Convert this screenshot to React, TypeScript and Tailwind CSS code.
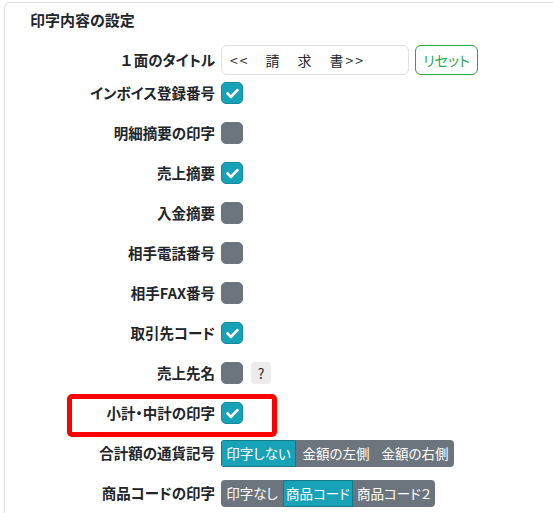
import React from 'react'

const font = { fontFamily: '"Noto Sans CJK JP", "Noto Sans", sans-serif', fontFeatureSettings: '"palt"' }

function Check({ on }: { on: boolean }) {
  return (
    <span
      className={
        'flex h-[22px] w-[22px] items-center justify-center rounded-[5px] border ' +
        (on ? 'border-[#138a9c] bg-[#17a2b8]' : 'border-[#6c757d] bg-[#6c757d]')
      }
    >
      {on && (
        <svg viewBox="0 0 512 512" className="h-[13px] w-[13px]" fill="#fff">
          <path d="M173.9 439.4 7.5 273c-10-10-10-26.2 0-36.2l36.2-36.2c10-10 26.2-10 36.2 0L192 312.7 432.1 72.6c10-10 26.2-10 36.2 0l36.2 36.2c10 10 10 26.2 0 36.2L210.1 439.4c-10 10-26.2 10-36.2 0z" />
        </svg>
      )}
    </span>
  )
}

// widths follow the screenshot
function Segs({ items, active }: { items: [string, string][]; active: number }) {
  return (
    <div className="flex h-[27px] overflow-hidden rounded-[4px] bg-[#6c757d] text-[13.5px] text-white">
      {items.map(([t, w], i) => (
        <span
          key={t}
          className={
            'flex items-center justify-center whitespace-nowrap ' +
            w +
            (i === active ? ' border border-[#117a8b] bg-[#17a2b8]' : '')
          }
        >
          {t}
        </span>
      ))}
    </div>
  )
}

const rows: { label: string; on?: boolean; help?: boolean; mark?: boolean }[] = [
  { label: 'インボイス登録番号', on: true },
  { label: '明細摘要の印字', on: false },
  { label: '売上摘要', on: true },
  { label: '入金摘要', on: false },
  { label: '相手電話番号', on: false },
  { label: '相手FAX番号', on: false },
  { label: '取引先コード', on: true },
  { label: '売上先名', on: false, help: true },
  { label: '小計・中計の印字', on: true, mark: true },
]

function Row({ label, children, mark }: { label: string; children: React.ReactNode; mark?: boolean }) {
  return (
    <div className="relative flex h-10 items-center">
      <div className="w-[216px] shrink-0 pr-[6px] text-right text-[14.5px] font-bold text-[#212529]">{label}</div>
      <div className="flex items-center gap-[8px]">{children}</div>
      {mark && (
        <div className="absolute left-[62px] top-[1px] h-[43px] w-[210px] rounded-[5px] border-[5px] border-[#ff0000]" />
      )}
    </div>
  )
}

export default function App() {
  return (
    <div className="h-[513px] w-[553px] overflow-hidden bg-white text-[#212529]" style={font}>
      <div className="ml-[4px] mt-[2px] w-[620px] rounded-[6px] border border-[#dcdfe3] pt-[6px] pb-10">
        <h2 className="mb-[16px] pl-[25px] text-[15px] font-bold leading-[22px]">印字内容の設定</h2>

        <div className="flex h-[26px] items-center">
          <div className="w-[216px] shrink-0 pr-[6px] text-right text-[14.5px] font-bold">
            <span style={{ fontFeatureSettings: 'normal' }}>１</span>面のタイトル
          </div>
          <div className="flex items-center gap-[6px]">
            <div className="flex h-[30px] w-[188px] items-center rounded-[6px] border border-[#dee2e6] px-[8px] text-[14px] tracking-[2px]">
              {'<<　請　求　書>>'}
            </div>
            <button className="h-[30px] w-[63px] rounded-[6px] border border-[#28a745] text-[14px] text-[#28a745]">
              リセット
            </button>
          </div>
        </div>

        {rows.map((r) => (
          <Row key={r.label} label={r.label} mark={r.mark}>
            <Check on={!!r.on} />
            {r.help && (
              <span className="flex h-[22px] w-[20px] items-center justify-center rounded-[4px] bg-[#ececec] text-[14px]">
                ?
              </span>
            )}
          </Row>
        ))}

        <Row label="合計額の通貨記号">
          <Segs
            items={[
              ['印字しない', 'w-[75px]'],
              ['金額の左側', 'w-[80px]'],
              ['金額の右側', 'w-[78px]'],
            ]}
            active={0}
          />
        </Row>
        <Row label="商品コードの印字">
          <Segs
            items={[
              ['印字なし', 'w-[62px]'],
              ['商品コード', 'w-[70px]'],
              ['商品コード２', 'w-[82px]'],
            ]}
            active={1}
          />
        </Row>
      </div>
    </div>
  )
}
